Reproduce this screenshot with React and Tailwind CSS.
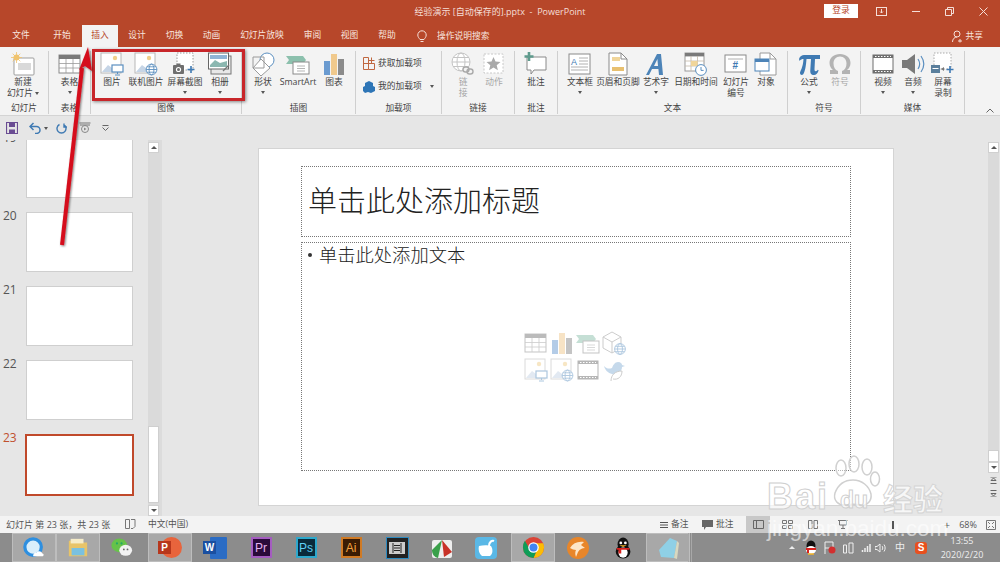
import React from "react";

const S = ({ children, w = 24, h = 24, vb = "0 0 24 24", className = "" }) => (
  <svg width={w} height={h} viewBox={vb} fill="none" className={className}>{children}</svg>
);

const Caret = ({ className = "" }) => (
  <span className={`block w-0 h-0 border-l-[2px] border-r-[2px] border-t-[3px] border-l-transparent border-r-transparent border-t-[#555] ${className}`} />
);

const Globe = ({ x, y, r = 5, c = "#5b8fc0" }) => (
  <g stroke={c} strokeWidth="0.9" fill="#fff">
    <circle cx={x} cy={y} r={r} />
    <ellipse cx={x} cy={y} rx={r * 0.45} ry={r} fill="none" />
    <path d={`M${x - r} ${y}h${2 * r}M${x - r * 0.85} ${y - r * 0.5}h${1.7 * r}M${x - r * 0.85} ${y + r * 0.5}h${1.7 * r}`} />
  </g>
);

const PicBase = () => (
  <>
    <rect x="1" y="1" width="20" height="20" fill="#fff" stroke="#b8b8b8" />
    <path d="M2 20l6-7 4 3 3-2 5 6z" fill="#c6d5e6" />
    <circle cx="15" cy="6" r="2.2" fill="#f0cf8a" />
  </>
);

const IPic = () => (
  <S>
    <PicBase />
    <rect x="12" y="13" width="11" height="7" fill="#fff" stroke="#5b8fc0" strokeWidth="1.2" />
    <path d="M17.5 20v2M15 23h5" stroke="#5b8fc0" />
  </S>
);
const IOnline = () => (
  <S><PicBase /><Globe x={17.5} y={17.5} r={5.4} /></S>
);
const IShot = () => (
  <S>
    <rect x="4" y="1" width="16" height="17" fill="#fff" stroke="#9a9a9a" strokeDasharray="1.5 1.5" />
    <rect x="0" y="13" width="11" height="9" rx="1" fill="#6f6f6f" />
    <rect x="3.5" y="11.5" width="4" height="2" fill="#6f6f6f" />
    <circle cx="5.5" cy="17.5" r="2.6" fill="#fff" />
    <circle cx="5.5" cy="17.5" r="1.5" fill="#6f6f6f" />
    <path d="M18 14v7M14.5 17.5h7" stroke="#3f7ab3" strokeWidth="1.6" />
  </S>
);
const IAlbum = () => (
  <S>
    <rect x="3" y="4" width="20" height="18" fill="#e8e8e8" stroke="#777" />
    <rect x="0.5" y="1" width="20" height="16" fill="#fff" stroke="#666" />
    <rect x="2" y="3" width="17" height="4" fill="#8fb4d6" />
    <path d="M2 13l5-5 5 3 7-2v6H2z" fill="#8bb7b0" />
    <path d="M15 19l6-6" stroke="#777" strokeWidth="1.2" />
  </S>
);
const INew = () => (
  <S>
    <rect x="3" y="6" width="20" height="17" rx="1" fill="#fff" stroke="#9d9d9d" />
    <rect x="7" y="11" width="13" height="7" fill="#d9d9d9" />
    <circle cx="5.5" cy="5.5" r="3" fill="#f0c36d" />
    <path d="M5.5 0v11M0 5.5h11M1.7 1.7l7.6 7.6M9.3 1.7L1.7 9.3" stroke="#f0c36d" strokeWidth="0.8" />
  </S>
);
const ITable = ({ size = 24 }) => (
  <S w={size} h={size}>
    <rect x="1" y="3" width="21" height="18" fill="#fff" stroke="#8a8a8a" />
    <rect x="1" y="3" width="21" height="4" fill="#7a7a7a" />
    <path d="M1 11.5h21M1 16h21M8 7v14M15 7v14" stroke="#9a9a9a" strokeWidth="0.8" />
  </S>
);
const IShape = () => (
  <S>
    <circle cx="16" cy="8" r="7" fill="#fff" stroke="#5b8fc0" />
    <path d="M10 7l9 9-9 8-8-8z" fill="#fff" stroke="#9a9a9a" />
    <path d="M2 5h11v11H2z" fill="none" stroke="#9a9a9a" />
  </S>
);
const ISmart = () => (
  <S>
    <path d="M0 4h17l3 4-3 4H0l3-4z" fill="#8cc0ad" />
    <rect x="7" y="10" width="16" height="12" fill="#fff" stroke="#8a8a8a" />
    <path d="M11 14h8M11 16.5h8M11 19h8" stroke="#b5b5b5" />
  </S>
);
const IChart = ({ size = 24 }) => (
  <S w={size} h={size}>
    <rect x="2" y="9" width="6" height="14" fill="#6b9bd0" />
    <rect x="9" y="2" width="6" height="21" fill="#f0c98c" />
    <rect x="16" y="7" width="6" height="16" fill="#8b8b8b" />
  </S>
);
const IGet = () => (
  <S w={12} h={13} vb="0 0 12 13">
    <path d="M.5.5h5v12h-5zM.5 6.5h11v6h-6M5.5 3.5h6M8.5.5v6" stroke="#c0673f" fill="none" />
  </S>
);
const IMine = () => (
  <S w={12} h={12} vb="0 0 12 12">
    <path d="M6 0l4 2v3l2 1v4l-4 2-3-1-3 1-2-2V6l2-1V2z" fill="#2e75b6" />
  </S>
);
const ILink = () => (
  <S>
    <circle cx="10" cy="10" r="9" stroke="#c4c4c4" fill="#fff" />
    <ellipse cx="10" cy="10" rx="4" ry="9" stroke="#c4c4c4" />
    <path d="M1 10h18M2 5.5h16M2 14.5h16" stroke="#c4c4c4" />
    <rect x="12" y="15" width="6" height="5" rx="2.5" stroke="#aaa" strokeWidth="1.4" fill="#f3f3f3" />
    <rect x="16" y="17" width="6" height="5" rx="2.5" stroke="#aaa" strokeWidth="1.4" fill="none" />
  </S>
);
const IAction = () => (
  <S>
    <rect x="2" y="2" width="19" height="19" fill="#fff" stroke="#c8c8c8" strokeDasharray="2 1.5" />
    <path d="M11.5 5l2 4.6 5 .4-3.8 3.3 1.2 4.9-4.4-2.7-4.4 2.7 1.2-4.9L4.5 10l5-.4z" fill="#a9a9a9" />
  </S>
);
const IComment = () => (
  <S>
    <path d="M3 5h19v13H10l-3 4v-4H3z" fill="#fff" stroke="#8a8a8a" />
    <path d="M5 0v9M.5 4.5h9" stroke="#5f9b8d" strokeWidth="2.6" />
  </S>
);
const ITextBox = () => (
  <S>
    <rect x="1" y="2" width="21" height="20" fill="#fff" stroke="#8a8a8a" />
    <text x="3" y="13" fontSize="9" fill="#3f7ab3" fontFamily="Liberation Sans">A</text>
    <path d="M11 6h9M11 9h9M11 12h9M3 15h17M3 18h17" stroke="#b0b0b0" />
  </S>
);
const IHeader = () => (
  <S>
    <path d="M3 1h12l6 6v16H3z" fill="#fff" stroke="#8a8a8a" />
    <path d="M15 1v6h6" stroke="#8a8a8a" />
    <rect x="6" y="5" width="8" height="4" fill="#f0d59a" />
    <rect x="6" y="15" width="12" height="4" fill="#e8c070" />
  </S>
);
const IArt = () => (
  <S>
    <path d="M2 23L13 2h4l2 21h-4l-.6-6H8l-3 6z" fill="#4d84b8" />
    <path d="M10 14h4l-.6-7z" fill="#f3f3f3" />
  </S>
);
const IDate = () => (
  <S>
    <rect x="1" y="1" width="19" height="18" fill="#fff" stroke="#9a9a9a" />
    <rect x="1" y="1" width="19" height="3.4" fill="#7a7a7a" />
    <path d="M1 9h19M1 14h19M7 4v15M13.5 4v15" stroke="#c4b9a8" strokeWidth="0.8" />
    <rect x="7" y="9" width="6.5" height="5" fill="#f0d59a" />
    <circle cx="17" cy="18" r="5.4" fill="#fff" stroke="#5b8fc0" />
    <path d="M17 15v3.4h2.6" stroke="#5b8fc0" />
  </S>
);
const INum = () => (
  <S>
    <rect x="1" y="3" width="21" height="17" fill="#fff" stroke="#8a8a8a" />
    <path d="M4 7h15" stroke="#b0b0b0" />
    <text x="8.5" y="17" fontSize="10" fontWeight="bold" fill="#3f7ab3" fontFamily="Liberation Sans">#</text>
  </S>
);
const IObject = () => (
  <S>
    <path d="M6 1h10l6 6v16H6z" fill="#fff" stroke="#9a9a9a" />
    <path d="M16 1v6h6" stroke="#9a9a9a" />
    <rect x="1" y="7" width="14" height="12" fill="#fff" stroke="#4d84b8" />
    <rect x="1" y="7" width="14" height="3" fill="#4d84b8" />
  </S>
);
const IPi = () => (
  <S>
    <path d="M2 7c1-3 3-4 5-4h16v4h-5l-.5 10c0 2 .5 2.5 2 2 .5 0 1-.5 1.3-1.200l.8.4C21 21 19 23 17 23c-3 0-4-2-3.700-5l.7-11H9.500C9 14 8 20 6 22.500 5 23.500 3 23 3 21c0-2 3-5 3.500-14C5 7 3.500 7.500 2.600 9z" fill="#3f7ab3" />
  </S>
);
const IOmega = () => (
  <S>
    <path d="M2 22h8v-3c-3-1-4.500-4-4.500-7.500 0-4 2.500-7 6.500-7s6.500 3 6.500 7c0 3.500-1.500 6.500-4.500 7.500v3h8v-4h-3c2-1.500 3.500-4 3.500-7 0-5.500-4.500-9-10.500-9S1.500 5.500 1.500 11c0 3 1.500 5.500 3.500 7H2z" fill="#b3b3b3" />
  </S>
);
const IVideo = ({ size = 24 }) => (
  <S w={size} h={size}>
    <rect x="2" y="3" width="20" height="18" fill="#fff" stroke="#6f6f6f" />
    <rect x="2" y="3" width="20" height="3" fill="#6f6f6f" />
    <rect x="2" y="18" width="20" height="3" fill="#6f6f6f" />
    <path d="M4 4.500h16M4 19.500h16" stroke="#fff" strokeWidth="1" strokeDasharray="1.500 1.500" />
  </S>
);
const IAudio = () => (
  <S>
    <path d="M1 8h5l8-6v20l-8-6H1z" fill="#7a7a7a" />
    <path d="M17 7c2 3 2 7 0 10M20 4c3.500 5 3.500 11 0 16" stroke="#5b8fc0" strokeWidth="1.200" />
  </S>
);
const IRecord = () => (
  <S>
    <rect x="3" y="1" width="17" height="16" fill="#fff" stroke="#aaa" strokeDasharray="1.500 1.500" />
    <rect x="0" y="13" width="9" height="8" fill="#5b7f9c" />
    <path d="M1.500 16.500h6" stroke="#fff" />
    <path d="M10 17l3-2v4z" fill="#777" />
    <path d="M19 14v7M15.500 17.500h7" stroke="#3f7ab3" strokeWidth="1.600" />
  </S>
);
const I3d = ({ size = 24 }) => (
  <S w={size} h={size}>
    <path d="M10 1l9 5v11l-9 5-9-5V6zM1 6l9 5 9-5M10 11v11" stroke="#9a9a9a" fill="#fff" />
    <Globe x={18} y={18} r={5.400} />
  </S>
);
const IBird = () => (
  <S>
    <path d="M2 8c3 3 5 3 8 2 1-3 3-6 6-6s4 2 4 3l3 1-3 1c0 5-5 8-10 7C6 15 3 12 2 8z" fill="#8db4d8" />
    <path d="M9 23c0-6 4-10 11-10 0 6-4 9-9 8" stroke="#9a9a9a" fill="#fff" />
  </S>
);

const Btn = ({ w, icon, lines, caret, disabled, inlineCaret }) => (
  <div className={`flex flex-col items-center shrink-0 ${disabled ? "text-[#a6a6a6]" : "text-[#444]"}`} style={{ width: w }}>
    <div className="h-[26px] flex items-start justify-center pt-[1px]">{icon}</div>
    {lines.map((l, i) => (
      <div key={i} className="h-[11px] leading-[11px] whitespace-nowrap flex items-center gap-[2px]">
        {l}
        {inlineCaret && i === lines.length - 1 && <Caret />}
      </div>
    ))}
    {caret && <Caret className="mt-[3px]" />}
  </div>
);

const Group = ({ w, pl = 0, label, children }) => (
  <div className="flex flex-col border-r border-[#cfcfcf] shrink-0" style={{ width: w }}>
    <div className="h-[51px] flex" style={{ paddingLeft: pl }}>{children}</div>
    <div className="h-[12px] leading-[12px] text-center text-[#444]">{label}</div>
  </div>
);

const Tab = ({ w, children, active }) => (
  <div className={`flex items-center justify-center shrink-0 h-[22px] pb-[1px] ${active ? "bg-[#f3f3f3] text-[#b7472a]" : "text-[#f7e5df]"}`} style={{ width: w }}>
    {children}
  </div>
);

const Thumb = ({ n, h = 60, sel, clip }) => (
  <div className="flex shrink-0" style={{ height: h }}>
    <div className={`w-[26px] pl-[3px] text-[12px] leading-[14px] font-['Open_Sans',sans-serif] ${sel ? "text-[#c0502f]" : "text-[#555]"} ${clip ? "-mt-[9px]" : "-mt-[3px]"}`}>{n}</div>
    <div className={`h-full bg-white ${sel ? "border-[2px] border-[#c0492b] -mx-[1px] w-[109px]" : "w-[107px] border border-[#cfcfcf]"} ${clip ? "border-t-0" : ""}`} />
  </div>
);

const ScrollBtn = ({ up }) => (
  <div className="h-[11px] w-[11px] bg-white border border-[#d0d0d0] flex items-center justify-center shrink-0">
    <span className={`block w-0 h-0 border-l-[3px] border-r-[3px] border-l-transparent border-r-transparent ${up ? "border-b-[3px] border-b-[#555]" : "border-t-[3px] border-t-[#555]"}`} />
  </div>
);

const TaskItem = ({ active, children }) => (
  <div className={`w-[44px] h-[29px] flex items-center justify-center shrink-0 ${active ? "bg-[#a8a8a8] border border-[#bdbdbd]" : ""}`}>{children}</div>
);

const AppBox = ({ label, fg, bg, bd }) => (
  <div className="w-[21px] h-[21px] flex items-center justify-center text-[12px] font-['Liberation_Sans',sans-serif] border-2" style={{ color: fg, background: bg, borderColor: bd }}>{label}</div>
);

export default function App() {
  return (
    <div className="w-[1000px] h-[562px] overflow-hidden relative flex flex-col bg-[#e6e6e6] text-[8.750px] font-['Open_Sans','Noto_Sans_CJK_SC',sans-serif]">
      {/* Title bar */}
      <div className="h-[47px] bg-[#b7472a] shrink-0 flex flex-col">
        <div className="h-[25px] flex items-center relative">
          <div className="flex-1 text-center text-[#f5dfd8] text-[9px] -mt-[1px]">经验演示 [自动保存的].pptx&nbsp; -&nbsp; PowerPoint</div>
          <div className="flex items-center absolute right-0 top-[4px]">
            <div className="w-[34px] h-[14px] bg-white text-[#b7472a] flex items-center justify-center mr-[6px]">登录</div>
            <div className="w-[35px] flex justify-center">
              <S w={11} h={9} vb="0 0 11 9"><rect x=".5" y=".5" width="10" height="8" stroke="#f5dfd8" /><path d="M5.500 2v4M4 4.500l1.500 1.500L7 4.500" stroke="#f5dfd8" /></S>
            </div>
            <div className="w-[33px] flex justify-center"><div className="w-[8px] h-[1px] bg-[#f5dfd8]" /></div>
            <div className="w-[34px] flex justify-center">
              <S w={9} h={9} vb="0 0 9 9"><path d="M2.500 2.500V.5h6v6h-2M.5 2.500h6v6h-6z" stroke="#f5dfd8" /></S>
            </div>
            <div className="w-[34px] flex justify-center">
              <S w={9} h={9} vb="0 0 9 9"><path d="M.5.5l8 8M8.500.5l-8 8" stroke="#f5dfd8" /></S>
            </div>
          </div>
        </div>
        <div className="flex items-end h-[22px]">
          <Tab w={42}>文件</Tab>
          <Tab w={40}>开始</Tab>
          <Tab w={36} active>插入</Tab>
          <Tab w={38}>设计</Tab>
          <Tab w={37}>切换</Tab>
          <Tab w={37}>动画</Tab>
          <Tab w={64}>幻灯片放映</Tab>
          <Tab w={37}>审阅</Tab>
          <Tab w={37}>视图</Tab>
          <Tab w={38}>帮助</Tab>
          <div className="w-[30px] h-[21px] flex items-center justify-center ml-[1px]">
            <S w={10} h={13} vb="0 0 10 13"><path d="M3 9.500C2 8 .8 7 .8 5A4.200 4.200 0 0 1 9.200 5c0 2-1.200 3-2.200 4.500zM3.500 11.500h3" stroke="#f5dfd8" /></S>
          </div>
          <div className="h-[21px] flex items-center text-[#f7e5df]">操作说明搜索</div>
          <div className="ml-auto h-[21px] flex items-center gap-[3px] text-[#f7e5df] pr-[17px]">
            <S w={11} h={13} vb="0 0 11 13"><circle cx="5" cy="4" r="3" stroke="#f5dfd8" /><path d="M.5 12c0-3 2-5 4.500-5M8 9v3.500M6 11h4" stroke="#f5dfd8" /></S>
            共享
          </div>
        </div>
      </div>

      {/* Ribbon */}
      <div className="h-[69px] shrink-0 bg-[#f3f3f3] border-b border-[#d4d4d4] flex items-stretch pt-[4px] pb-[1px] relative">
        <Group w={49} label="幻灯片">
          <Btn w={46} icon={<INew />} lines={["新建", "幻灯片"]} inlineCaret />
        </Group>
        <Group w={42} label="表格">
          <Btn w={41} icon={<ITable />} lines={["表格"]} caret />
        </Group>
        <Group w={151} pl={4} label="图像">
          <Btn w={34} icon={<IPic />} lines={["图片"]} />
          <Btn w={34} icon={<IOnline />} lines={["联机图片"]} />
          <Btn w={44} icon={<IShot />} lines={["屏幕截图"]} caret />
          <Btn w={26} icon={<IAlbum />} lines={["相册"]} caret />
        </Group>
        <Group w={114} pl={6} label="插图">
          <Btn w={30} icon={<IShape />} lines={["形状"]} caret />
          <Btn w={40} icon={<ISmart />} lines={["SmartArt"]} />
          <Btn w={32} icon={<IChart />} lines={["图表"]} />
        </Group>
        <Group w={86} label="加载项">
          <div className="flex flex-col pl-[7px] pt-[6px] gap-[10px] text-[#444]">
            <div className="flex items-center gap-[3px] h-[13px]"><IGet />获取加载项</div>
            <div className="flex items-center gap-[3px] h-[13px]"><IMine />我的加载项<Caret className="ml-[5px]" /></div>
          </div>
        </Group>
        <Group w={73} pl={6} label="链接">
          <Btn w={30} disabled icon={<ILink />} lines={["链", "接"]} />
          <Btn w={32} disabled icon={<IAction />} lines={["动作"]} />
        </Group>
        <Group w={43} label="批注">
          <Btn w={42} icon={<IComment />} lines={["批注"]} />
        </Group>
        <Group w={230} pl={5} label="文本">
          <Btn w={34} icon={<ITextBox />} lines={["文本框"]} caret />
          <Btn w={42} icon={<IHeader />} lines={["页眉和页脚"]} />
          <Btn w={34} icon={<IArt />} lines={["艺术字"]} caret />
          <Btn w={46} icon={<IDate />} lines={["日期和时间"]} />
          <Btn w={34} icon={<INum />} lines={["幻灯片", "编号"]} />
          <Btn w={26} icon={<IObject />} lines={["对象"]} />
        </Group>
        <Group w={73} pl={6} label="符号">
          <Btn w={30} icon={<IPi />} lines={["公式"]} caret />
          <Btn w={32} disabled icon={<IOmega />} lines={["符号"]} />
        </Group>
        <Group w={104} pl={7} label="媒体">
          <Btn w={30} icon={<IVideo />} lines={["视频"]} caret />
          <Btn w={30} icon={<IAudio />} lines={["音频"]} caret />
          <Btn w={30} icon={<IRecord />} lines={["屏幕", "录制"]} />
        </Group>
        <div className="flex-1 flex items-end justify-end pr-[6px] pb-[1px]">
          <S w={8} h={5} vb="0 0 8 5"><path d="M.5 4.500L4 1l3.500 3.500" stroke="#666" /></S>
        </div>
      </div>

      {/* Quick access */}
      <div className="h-[24px] shrink-0 flex items-center pl-[6px] bg-[#e6e6e6]">
        <S w={12} h={12} vb="0 0 12 12"><path d="M.5.5h11v11H.5z" stroke="#6a4c93" strokeWidth="1.200" /><rect x="3" y="1" width="6" height="4" fill="#6a4c93" /><rect x="3" y="7.500" width="6" height="4" fill="#6a4c93" /></S>
        <div className="w-[15px] ml-[9px] flex justify-center">
          <S w={12} h={12} vb="0 0 12 12"><path d="M4.500 1L1 4.500 4.500 8M1 4.500h6.500a3.500 3.500 0 0 1 0 7H6" stroke="#3f7ab3" strokeWidth="1.500" /></S>
        </div>
        <Caret className="ml-[2px]" />
        <div className="ml-[8px]">
          <S w={11} h={11} vb="0 0 11 11"><path d="M7.500 1.500a4.500 4.500 0 1 1-4 0M8 .5v3.500h3" stroke="#3f7ab3" strokeWidth="1.400" /></S>
        </div>
        <div className="ml-[12px]">
          <S w={12} h={12} vb="0 0 12 12"><path d="M.5 1h11M1 3h10" stroke="#777" /><circle cx="6" cy="7" r="3.500" stroke="#888" /><path d="M5 5.500l2.500 1.500L5 8.500z" fill="#888" /></S>
        </div>
        <div className="ml-[11px]">
          <S w={7} h={6} vb="0 0 7 6"><path d="M.5.500h6M.5 2.500L3.500 5.500l3-3" stroke="#666" /></S>
        </div>
      </div>

      {/* Main */}
      <div className="flex-1 min-h-0 flex">
        <div className="w-[148px] shrink-0 overflow-hidden flex flex-col gap-[14px]">
          <Thumb n="19" h={58} clip />
          <Thumb n="20" />
          <Thumb n="21" />
          <Thumb n="22" />
          <Thumb n="23" h={62} sel />
        </div>
        <div className="w-[12px] shrink-0 bg-[#dadada] flex flex-col pt-[2px]">
          <ScrollBtn up />
          <div className="flex-1 flex flex-col justify-end">
            <div className="h-[77px] w-[11px] bg-white border border-[#cfcfcf]" />
          </div>
          <div className="mt-[2px]"><ScrollBtn /></div>
        </div>
        <div className="flex-1 min-w-0 flex border-l-[2px] border-[#dcdcdc]">
          <div className="flex-1 pt-[8px] pl-[96px]">
            <div className="w-[636px] h-[358px] bg-white border border-[#d4d4d4] px-[42px] pt-[17px] flex flex-col gap-[5px]">
              <div className="h-[71px] shrink-0 border border-dotted border-[#777] flex items-center pl-[6px] pb-[2px] text-[29px] leading-none font-light text-[#222]">单击此处添加标题</div>
              <div className="h-[229px] shrink-0 border border-dotted border-[#777] relative flex items-center justify-center">
                <div className="absolute left-[6px] top-0 text-[18.300px] leading-[24px] text-[#222] flex items-center gap-[7px] font-light">
                  <span className="w-[4px] h-[4px] rounded-full bg-[#333]" />
                  单击此处添加文本
                </div>
                <div className="grid grid-cols-[26px_26px_26px_26px] gap-y-[3px] opacity-50">
                  <ITable />
                  <IChart />
                  <ISmart />
                  <I3d />
                  <IPic />
                  <IOnline />
                  <IVideo />
                  <IBird />
                </div>
              </div>
            </div>
          </div>
          <div className="w-[12px] shrink-0 flex flex-col pt-[2px] bg-[#e6e6e6]">
            <ScrollBtn up />
            <div className="flex-1 bg-[#dadada] w-[11px] flex flex-col justify-end">
              <div className="h-[12px] w-[11px] bg-white border border-[#cfcfcf]" />
            </div>
            <ScrollBtn />
            <div className="h-[43px] w-[11px] flex flex-col items-center pt-[4px] gap-[6px]">
              <S w={7} h={7} vb="0 0 7 7"><path d="M.5 6.500h6M3.500 1L1 3.500h5zM.5 0h6" stroke="#666" /></S>
              <S w={7} h={7} vb="0 0 7 7"><path d="M.5.500h6M3.500 6L1 3.500h5zM.5 7h6" stroke="#666" /></S>
            </div>
          </div>
        </div>
      </div>

      {/* Status */}
      <div className="h-[17px] shrink-0 bg-[#f3f3f3] flex items-center text-[#555] pl-[6px]">
        <span className="w-[119px] whitespace-nowrap text-[9px]">幻灯片 第 23 张，共 23 张</span>
        <S w={11} h={11} vb="0 0 11 11"><path d="M.5.5h4v9h-4zM6 .5h4v7l-2 2H6" stroke="#777" /></S>
        <span className="ml-[12px]">中文(中国)</span>
        <div className="ml-auto flex items-center h-full">
          <div className="flex items-center gap-[3px] w-[42px]">
            <S w={8} h={8} vb="0 0 8 8"><path d="M0 1.500h8M0 4h8M0 6.500h8" stroke="#555" /></S>备注
          </div>
          <div className="flex items-center gap-[3px] w-[44px]">
            <S w={11} h={10} vb="0 0 11 10"><path d="M0 0h11v7H4L2 10V7H0z" fill="#666" /></S>批注
          </div>
          <div className="w-[24px] h-full bg-[#c8c8c8] flex items-center justify-center">
            <S w={11} h={9} vb="0 0 11 9"><path d="M.5.5h10v8H.5zM3.500.5v8" stroke="#666" /></S>
          </div>
          <div className="w-[34px] flex justify-center"><S w={11} h={9} vb="0 0 11 9"><path d="M.5.5h4v3h-4zM6.500.5h4v3h-4zM.5 5.500h4v3h-4zM6.500 5.500h4v3h-4z" stroke="#777" /></S></div>
          <div className="w-[18px] flex justify-center"><S w={10} h={9} vb="0 0 10 9"><path d="M.5.500h3.500v8H.5zM6 .500h3.500v8H6z" stroke="#777" /></S></div>
          <div className="w-[42px] flex justify-center"><S w={10} h={9} vb="0 0 10 9"><path d="M0 .5h10M1.500 1v4h7V1M5 5v3M3 8.500h4" stroke="#777" /></S></div>
          <div className="w-[58px] flex justify-center"><div className="w-[2px] h-[8px] bg-[#555]" /></div>
          <div className="w-[17px]" />
          <div className="w-[16px] text-center text-[11px] leading-none">+</div>
          <span className="w-[26px] text-center text-[9px]">68%</span>
          <div className="w-[19px] flex justify-center"><S w={10} h={10} vb="0 0 10 10"><path d="M.5.500h9v9h-9zM2 2l2 2M8 2L6 4M2 8l2-2M8 8L6 6" stroke="#777" /></S></div>
        </div>
      </div>

      {/* Taskbar */}
      <div className="h-[29px] shrink-0 bg-[#8c8c8c] flex items-center pl-[12px] text-[#eee] relative">
        <TaskItem active>
          <S w={22} h={22}>
            <circle cx="11" cy="11" r="9" stroke="#2e8fe0" strokeWidth="3.500" fill="#d9eefb" />
            <path d="M11 21c0-3 2-4 4-4 1-2 5-2 6 1 2 0 2 3 0 3z" fill="#fff" />
          </S>
        </TaskItem>
        <TaskItem active>
          <S w={24} h={22}>
            <path d="M2 4h8l2 2h10v15H2z" fill="#e8c468" />
            <rect x="4" y="2" width="14" height="5" fill="#f6ecc8" />
            <rect x="5" y="12" width="14" height="8" fill="#7ac1e0" />
          </S>
        </TaskItem>
        <TaskItem>
          <S w={24} h={22}>
            <ellipse cx="9" cy="9" rx="8.500" ry="7.500" fill="#66c34a" />
            <ellipse cx="16" cy="14.500" rx="7" ry="6" fill="#f2f2f2" />
            <circle cx="6.500" cy="7" r="1.200" fill="#2a6" />
            <circle cx="11.500" cy="7" r="1.200" fill="#2a6" />
            <circle cx="14" cy="13.500" r="1" fill="#666" />
            <circle cx="18" cy="13.500" r="1" fill="#666" />
          </S>
        </TaskItem>
        <div className="w-[4px]" />
        <TaskItem active>
          <div className="relative w-[24px] h-[22px]">
            <div className="absolute right-0 top-0 w-[21px] h-[21px] rounded-full bg-[#e8643c]" />
            <div className="absolute left-0 top-[4px] w-[13px] h-[13px] bg-[#b7371c] text-white text-[10px] font-bold leading-[13px] text-center font-['Liberation_Sans',sans-serif]">P</div>
          </div>
        </TaskItem>
        <div className="w-[1px]" />
        <TaskItem>
          <div className="relative w-[24px] h-[22px]">
            <div className="absolute right-0 top-0 w-[17px] h-[22px] bg-[#2b6cc4] rounded-[1px]" />
            <div className="absolute left-0 top-[4px] w-[13px] h-[13px] bg-[#1a4fa0] text-white text-[10px] font-bold leading-[13px] text-center font-['Liberation_Sans',sans-serif]">W</div>
          </div>
        </TaskItem>
        <div className="w-[2px]" />
        <TaskItem><AppBox label="Pr" fg="#e6b3f0" bg="#2a0a3a" bd="#a45cc0" /></TaskItem>
        <div className="w-[1px]" />
        <TaskItem><AppBox label="Ps" fg="#5fd0f5" bg="#0a2a3a" bd="#2da8cc" /></TaskItem>
        <div className="w-[1px]" />
        <TaskItem><AppBox label="Ai" fg="#f5a340" bg="#3a1c04" bd="#d07a24" /></TaskItem>
        <div className="w-[2px]" />
        <TaskItem>
          <div className="w-[23px] h-[22px] bg-[#222] border border-[#2c8ac0] flex items-center justify-center">
            <S w={16} h={12} vb="0 0 16 12"><path d="M0 0h16v12H0z" fill="#ccc" /><path d="M4 1v10M12 1v10M5 3.500h6M5 6h6M5 8.500h6" stroke="#222" /></S>
          </div>
        </TaskItem>
        <TaskItem>
          <S w={24} h={24}>
            <rect x="3" y="4" width="20" height="18" rx="2" fill="#eee" />
            <path d="M13 4L3 14c0 4 2 7 6 8z" fill="#3aa04a" />
            <path d="M13 4l10 12-8 5z" fill="#c83228" />
          </S>
        </TaskItem>
        <div className="w-[1px]" />
        <TaskItem>
          <S w={24} h={24}>
            <rect x="1" y="1" width="22" height="22" rx="4" fill="#5ab8e6" />
            <path d="M5 10c4-1 9-1 12 0 2 3 2 8-1 10H8c-3-2-4-7-3-10z" fill="#fff" />
            <path d="M15 10c0-4 3-6 5-5" stroke="#fff" strokeWidth="2" />
          </S>
        </TaskItem>
        <div className="w-[3px]" />
        <TaskItem active>
          <S w={23} h={23}>
            <circle cx="12" cy="12" r="11" fill="#db4437" />
            <path d="M12 23a11 11 0 0 0 11-11c0-1.500-.3-3-.9-4.500H12l4 6z" fill="#fbbc05" />
            <path d="M1 12a11 11 0 0 0 11 11l4-9.500H8L3 5a11 11 0 0 0-2 7z" fill="#0f9d58" />
            <circle cx="12" cy="12" r="5.500" fill="#fff" />
            <circle cx="12" cy="12" r="4.200" fill="#4285f4" />
          </S>
        </TaskItem>
        <div className="w-[1px]" />
        <TaskItem>
          <S w={24} h={24}>
            <circle cx="12" cy="12" r="11" fill="#e8862a" />
            <path d="M4 12c3-5 8-7 14-6l-3 3 4 3c-3 0-5 1-7 4l-2 5c-1-3-1-5 0-7-2 0-4-1-6-2z" fill="#fde6c8" />
          </S>
        </TaskItem>
        <div className="w-[2px]" />
        <TaskItem>
          <S w={22} h={24}>
            <ellipse cx="11" cy="8" rx="6" ry="7.500" fill="#111" />
            <ellipse cx="11" cy="16" rx="8" ry="7.500" fill="#111" />
            <ellipse cx="11" cy="17" rx="5" ry="5.500" fill="#fff" />
            <circle cx="8.500" cy="6.500" r="1.500" fill="#fff" />
            <circle cx="13.500" cy="6.500" r="1.500" fill="#fff" />
            <path d="M7 9h8l-4 2z" fill="#f5b324" />
            <path d="M4 12h14v2H9v4H6v-4H4z" fill="#d8201c" />
          </S>
        </TaskItem>
        <TaskItem active>
          <S w={24} h={24}>
            <path d="M3 14L14 2l7 3-3 17-13-1z" fill="#8fd0e6" />
            <path d="M18 22l3-17 2 2-2 16z" fill="#d8d8c0" />
          </S>
        </TaskItem>
        <div className="w-[1px] h-full border-l border-r border-[#a8a8a8] ml-[-2px] px-[1px]" />
        <div className="ml-auto flex items-center h-full">
          <span className="w-0 h-0 border-l-[3px] border-r-[3px] border-b-[3px] border-l-transparent border-r-transparent border-b-[#eee] mr-[10px]" />
          <S w={12} h={15} vb="0 0 12 15" className="mr-[7px]">
            <ellipse cx="6" cy="6" rx="4.500" ry="5.500" fill="#111" />
            <ellipse cx="6" cy="10" rx="5" ry="4" fill="#fff" />
            <path d="M1 8h10v2H4v3H2v-3H1z" fill="#d8201c" />
            <path d="M3 14h6" stroke="#f5b324" strokeWidth="1.500" />
          </S>
          <S w={12} h={13} vb="0 0 12 13" className="mr-[7px]">
            <path d="M1 1v12M1 1h8v6H1" stroke="#eee" />
            <circle cx="8" cy="9" r="3.500" fill="#d32f2f" />
          </S>
          <S w={11} h={12} vb="0 0 11 12" className="mr-[5px]"><path d="M.5 3h3v8h-3zM6 1h4v10H6z" stroke="#eee" /></S>
          <S w={12} h={10} vb="0 0 12 10" className="mr-[4px]"><path d="M1 9v0M3.500 9V7M6 9V5M8.500 9V3M11 9V1" stroke="#eee" strokeWidth="1.500" /></S>
          <S w={11} h={10} vb="0 0 11 10" className="mr-[9px]"><path d="M0 3.500h2L5 1v8L2 6.500H0zM7 3c1 1 1 3 0 4M9 1.500c1.500 2 1.500 5 0 7" stroke="#eee" /></S>
          <span className="text-[10px] mr-[10px]">中</span>
          <div className="w-[12px] h-[12px] rounded-[3px] bg-[#e8501e] text-white text-[10px] font-bold leading-[12px] text-center font-['Liberation_Sans',sans-serif] mr-[5px]">S</div>
          <div className="w-[60px] flex flex-col items-center text-[9px] leading-[14px] text-[#eee] font-['Open_Sans',sans-serif] mr-[8px]">
            <span>13:55</span>
            <span>2020/2/20</span>
          </div>
        </div>
      </div>

      {/* Red highlight rectangle */}
      <div className="absolute left-[92px] top-[49px] w-[153px] h-[52px] border-[3px] border-[#c8262a] shadow-[1px_1px_3px_rgba(0,0,0,0.45)] pointer-events-none" />
      {/* Red arrow */}
      <svg width="60" height="210" viewBox="0 0 60 210" className="absolute left-[50px] top-[40px] pointer-events-none">
        <defs>
          <filter id="sh" x="-30%" y="-10%" width="160%" height="120%">
            <feDropShadow dx="1" dy="1" stdDeviation="1.200" floodColor="#000" floodOpacity="0.5" />
          </filter>
        </defs>
        <g filter="url(#sh)">
          <path d="M12 205L32 28" stroke="#d5101c" strokeWidth="4" />
          <path d="M38 7L29 30 35 26 42 31z" fill="#d5101c" />
        </g>
      </svg>

      {/* Watermark */}
      <div className="absolute left-[767px] top-[455px] w-[180px] h-[84px] pointer-events-none text-white">
        <svg width="180" height="54" viewBox="0 0 180 54" className="absolute left-0 top-0" fill="none">
          <g stroke="#d0d0d0" fill="rgba(255,255,255,0.45)" strokeWidth="1.500">
            <ellipse cx="74" cy="13" rx="5" ry="8" />
            <ellipse cx="87" cy="9" rx="5" ry="8" />
            <ellipse cx="100" cy="12" rx="5" ry="8" />
            <ellipse cx="108" cy="24" rx="4.500" ry="7" />
            <path d="M68 38c3-8 9-13 18-13s16 6 18 14c1 7-4 12-10 11-6-1-10-1-15 0-8 1-13-5-11-12z" />
          </g>
        </svg>
        <div className="absolute left-0 top-[24px] text-[36px] leading-[36px] tracking-[2px] font-bold font-['Liberation_Sans',sans-serif] text-white/70 [-webkit-text-stroke:1px_#cfcfcf]">Bai</div>
        <div className="absolute left-[73px] top-[33px] text-[23px] leading-[24px] font-bold font-['Liberation_Sans',sans-serif] text-white/70 [-webkit-text-stroke:1px_#cfcfcf]">du</div>
        <div className="absolute left-[116px] top-[26px] text-[30px] leading-[32px] font-bold font-['Noto_Sans_CJK_SC',sans-serif] text-white/70 [-webkit-text-stroke:1px_#d5d5d5] whitespace-nowrap">经验</div>
        <div className="absolute left-0 top-[62px] text-[22.500px] leading-[24px] whitespace-nowrap text-white/60 font-['Liberation_Sans',sans-serif]">jingyan.baidu.com</div>
      </div>
    </div>
  );
}
